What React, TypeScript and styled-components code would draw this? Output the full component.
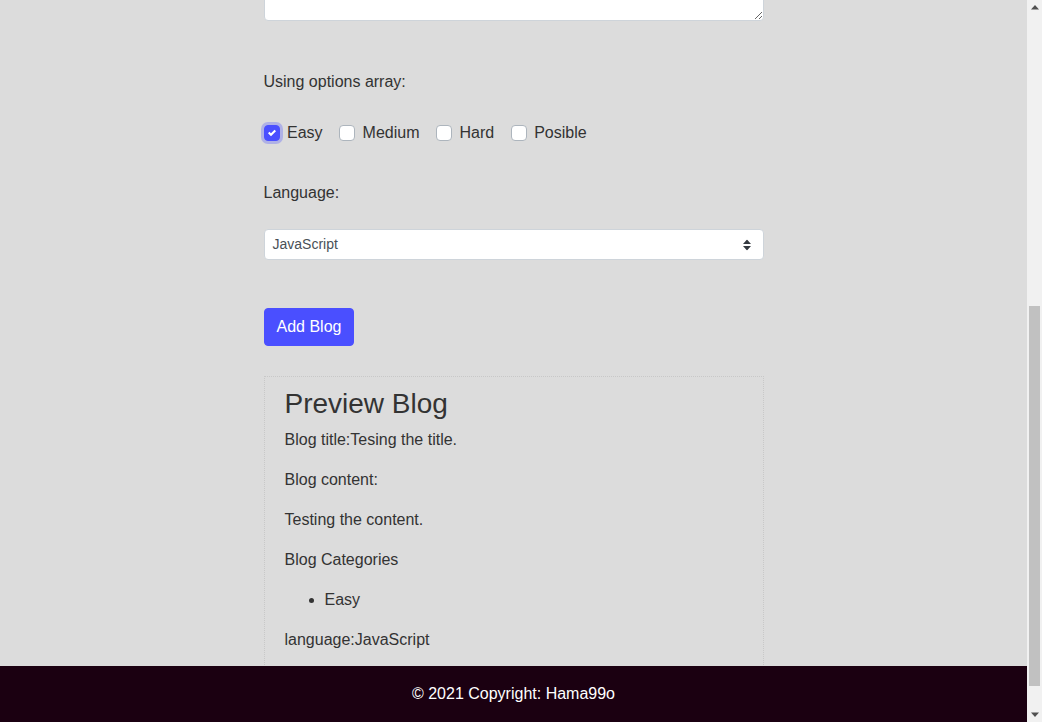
import React, { useLayoutEffect, useRef, useState } from "react";
import styled, { createGlobalStyle } from "styled-components";

const GlobalStyle = createGlobalStyle`
  html, body {
    margin: 0;
    padding: 0;
    height: 100%;
    overflow: hidden;
    background: #dcdcdc;
  }
  body {
    font-family: "Liberation Sans", Arial, sans-serif;
    font-size: 16px;
    line-height: 1.5;
    color: #333;
  }
  *, *::before, *::after { box-sizing: border-box; }
`;

const Shell = styled.div`
  display: flex;
  height: 100vh;
`;

const ScrollArea = styled.div`
  flex: 1;
  min-width: 0;
  height: 100%;
  overflow: hidden;
`;

const Rail = styled.div`
  width: 15px;
  height: 100%;
  display: flex;
  flex-direction: column;
  background: #f1f1f1;
`;

const RailButton = styled.div`
  height: 15px;
  display: flex;
  align-items: center;
  justify-content: center;
`;

const Track = styled.div`
  position: relative;
  flex: 1;
`;

const Thumb = styled.div`
  position: absolute;
  left: 2px;
  right: 2px;
  background: #c1c1c1;
`;

const Page = styled.div`
  padding: 0 0 82px;
`;

const Container = styled.main`
  width: 500px;
  margin: 0 auto;
  display: flex;
  flex-direction: column;
`;

const Label = styled.label<{ $gap?: number }>`
  display: block;
  line-height: 24px;
  margin-bottom: ${(p) => p.$gap ?? 8}px;
`;

const TextArea = styled.textarea`
  display: block;
  width: 100%;
  height: 572px;
  padding: 6px 12px;
  font: inherit;
  color: #495057;
  background: #fff;
  border: 1px solid #ced4da;
  border-radius: 4px;
  margin-bottom: 49px;
  resize: vertical;
`;

const CheckRow = styled.div`
  display: flex;
  align-items: center;
  gap: 16.5px;
  height: 24px;
  margin-bottom: 36px;
`;

const CheckItem = styled.label`
  display: flex;
  align-items: center;
  gap: 7.5px;
  line-height: 24px;
`;

const Box = styled.span<{ $checked?: boolean }>`
  display: inline-flex;
  align-items: center;
  justify-content: center;
  width: 16px;
  height: 16px;
  border-radius: 4px;
  border: 1px solid ${(p) => (p.$checked ? "#4a4fff" : "#adb5bd")};
  background: ${(p) => (p.$checked ? "#4a4fff" : "#fff")};
  box-shadow: ${(p) => (p.$checked ? "0 0 0 3px rgba(74, 79, 255, 0.3)" : "none")};
`;

const SelectBox = styled.div`
  position: relative;
  height: 31px;
  background: #fff;
  border: 1px solid #ced4da;
  border-radius: 4px;
  margin-bottom: 48px;
  display: flex;
  align-items: center;
  padding: 0 8px;
  font-size: 14px;
  color: #495057;
`;

const SelectArrows = styled.svg`
  position: absolute;
  right: 12px;
  top: 50%;
  transform: translateY(-50%);
`;

const Button = styled.button`
  align-self: flex-start;
  height: 38px;
  padding: 6px 12px;
  font: inherit;
  line-height: 24px;
  color: #fff;
  background: #4a4fff;
  border: 1px solid #4a4fff;
  border-radius: 4px;
  margin-bottom: 30px;
  cursor: pointer;
`;

const Preview = styled.section`
  border: 1px dotted #c8c8c8;
  padding: 10px 20px 10px;
`;

const PreviewTitle = styled.h3`
  font-size: 28px;
  font-weight: 500;
  line-height: 1.2;
  margin: 0 0 7px;
`;

const Para = styled.p`
  margin: 0 0 16px;
`;

const List = styled.ul`
  margin: 0 0 16px;
  padding-left: 40px;
`;

const Footer = styled.footer`
  position: fixed;
  left: 0;
  right: 15px;
  bottom: 0;
  height: 56px;
  display: flex;
  align-items: center;
  justify-content: center;
  background: #1b0011;
  color: #fff;
`;

const options = ["Easy", "Medium", "Hard", "Posible"];

export default function App() {
  const scrollRef = useRef<HTMLDivElement>(null);
  const areaRef = useRef<HTMLTextAreaElement>(null);
  const trackRef = useRef<HTMLDivElement>(null);
  const [thumb, setThumb] = useState({ top: 0, height: 0 });

  useLayoutEffect(() => {
    const sc = scrollRef.current;
    const el = areaRef.current;
    const tr = trackRef.current;
    if (!sc || !el || !tr) return;
    const r = el.getBoundingClientRect();
    sc.scrollTop = r.bottom + sc.scrollTop - 21;
    const len = tr.clientHeight;
    setThumb({
      top: (sc.scrollTop / sc.scrollHeight) * len,
      height: (sc.clientHeight / sc.scrollHeight) * len,
    });
  }, []);

  return (
    <>
      <GlobalStyle />
      <Shell>
        <ScrollArea ref={scrollRef}>
          <Page>
            <Container>
              <TextArea ref={areaRef} aria-label="Blog content" />
              <Label $gap={27}>Using options array:</Label>
              <CheckRow>
                {options.map((o, i) => (
                  <CheckItem key={o}>
                    <Box $checked={i === 0}>
                      {i === 0 && (
                        <svg width="8" height="8" viewBox="0 0 8 8">
                          <path
                            d="M6.564.75l-3.59 3.612-1.538-1.55L0 4.26 2.974 7.25 8 2.193z"
                            fill="#fff"
                          />
                        </svg>
                      )}
                    </Box>
                    {o}
                  </CheckItem>
                ))}
              </CheckRow>
              <Label $gap={24}>Language:</Label>
              <SelectBox>
                JavaScript
                <SelectArrows width="8" height="11" viewBox="0 0 8 11">
                  <path d="M4 0 L8 4.5 H0 Z M0 6.5 H8 L4 11 Z" fill="#343a40" />
                </SelectArrows>
              </SelectBox>
              <Button>Add Blog</Button>
              <Preview>
                <PreviewTitle>Preview Blog</PreviewTitle>
                <Para>Blog title:Tesing the title.</Para>
                <Para>Blog content:</Para>
                <Para>Testing the content.</Para>
                <Para>Blog Categories</Para>
                <List>
                  <li>Easy</li>
                </List>
                <Para>language:JavaScript</Para>
              </Preview>
            </Container>
          </Page>
        </ScrollArea>
        <Rail>
          <RailButton>
            <svg width="8" height="5" viewBox="0 0 8 5">
              <path d="M4 0 L8 4.5 H0 Z" fill="#505050" />
            </svg>
          </RailButton>
          <Track ref={trackRef}>
            <Thumb style={{ top: thumb.top, height: thumb.height }} />
          </Track>
          <RailButton>
            <svg width="8" height="5" viewBox="0 0 8 5">
              <path d="M0 0.5 H8 L4 5 Z" fill="#505050" />
            </svg>
          </RailButton>
        </Rail>
      </Shell>
      <Footer>© 2021 Copyright: Hama99o</Footer>
    </>
  );
}
